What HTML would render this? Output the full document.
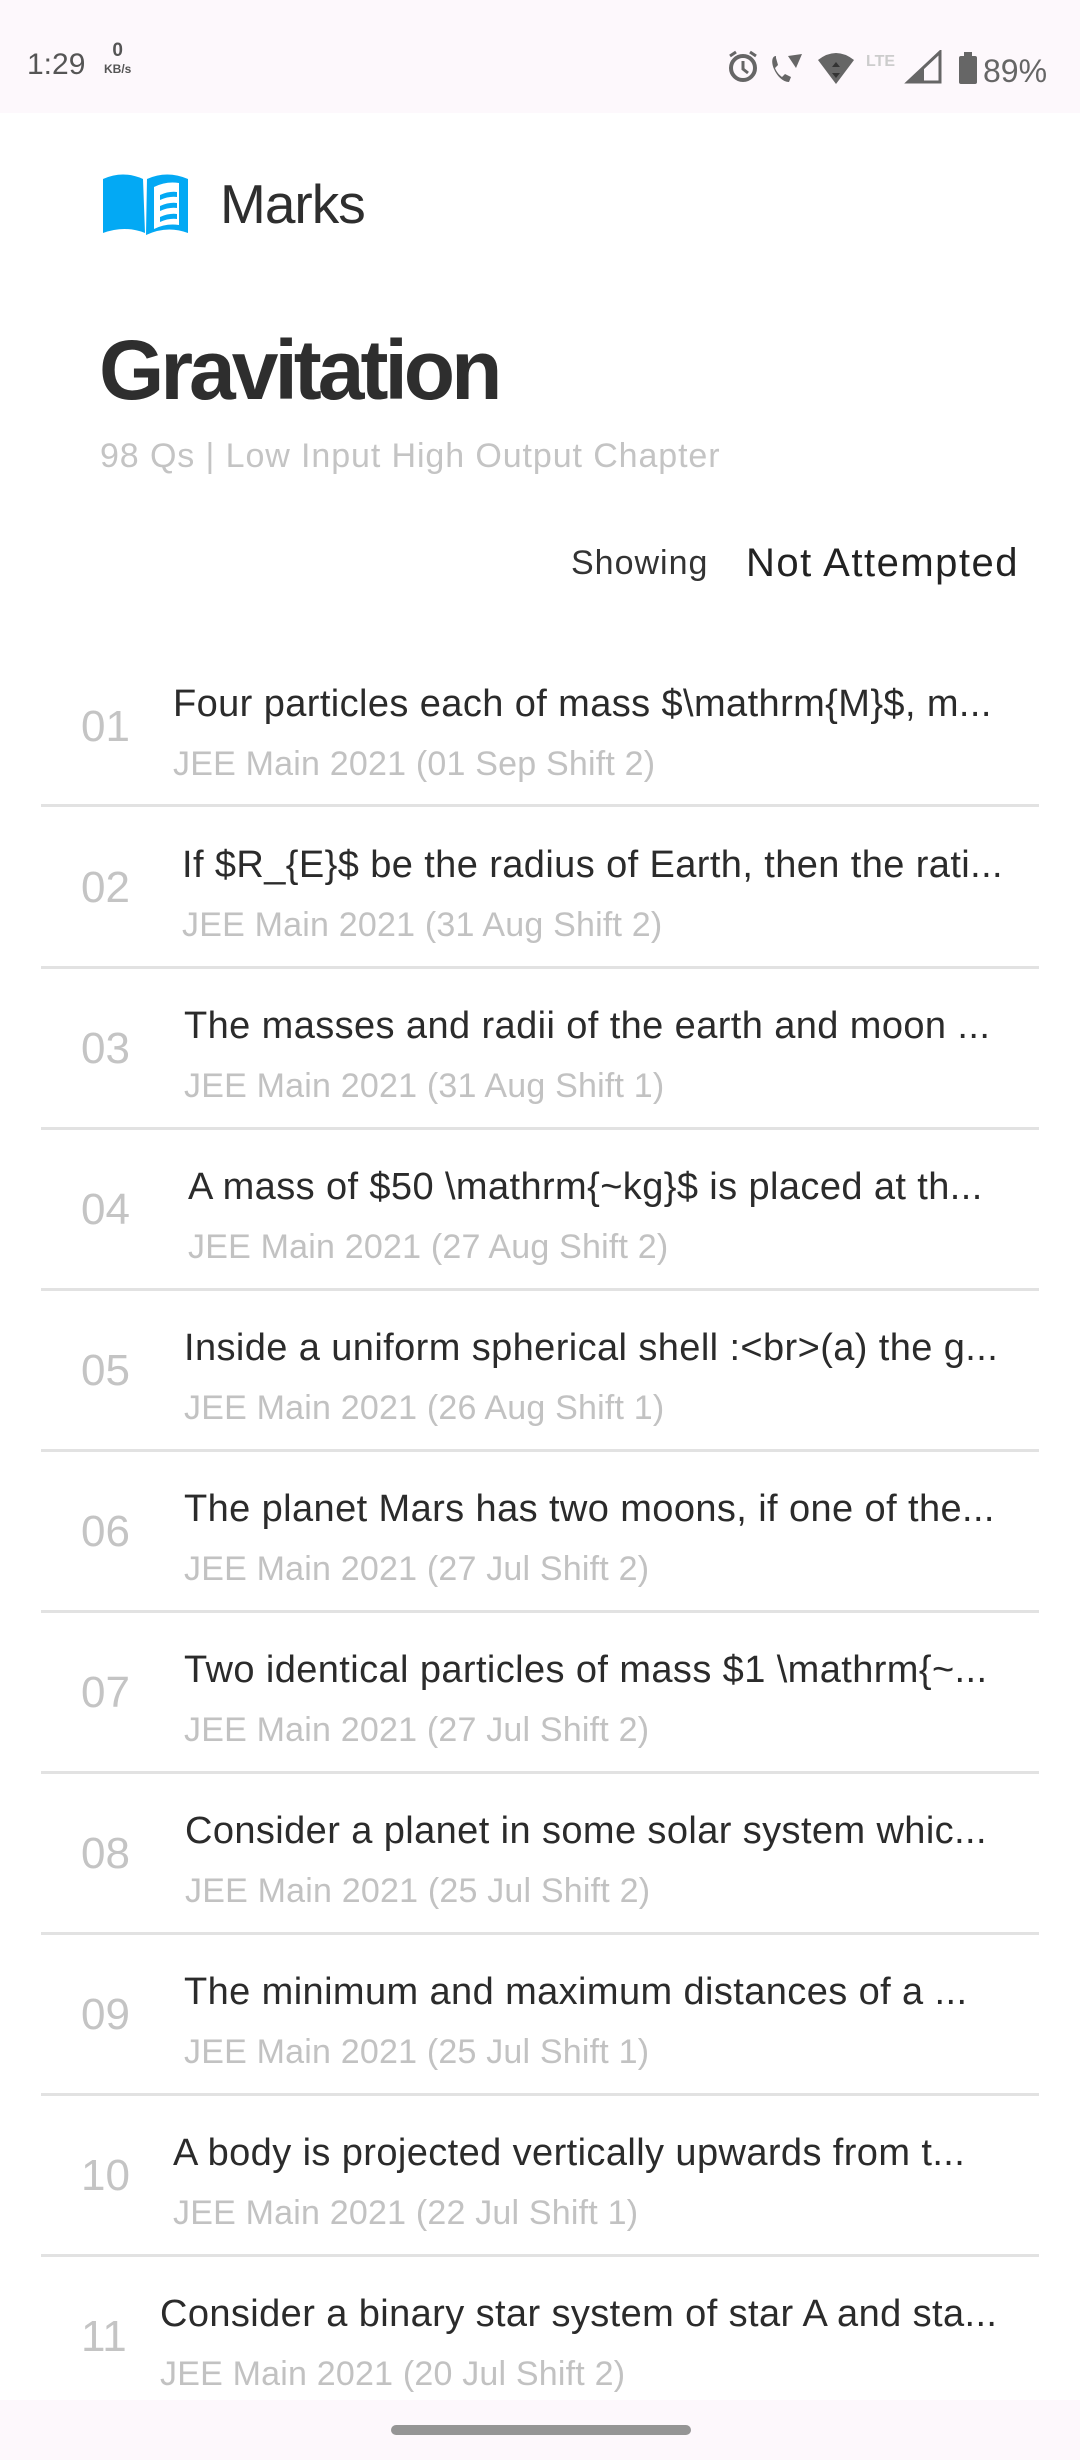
<!DOCTYPE html>
<html><head><meta charset="utf-8"><style>
*{margin:0;padding:0;box-sizing:border-box}
body{width:1080px;height:2460px;background:#fff;font-family:"Liberation Sans",sans-serif;position:relative;overflow:hidden}
.abs{position:absolute;white-space:nowrap}
.sb{position:absolute;left:0;top:0;width:1080px;height:113px;background:#fdf8fc}
.row .t{position:absolute;font-size:38px;letter-spacing:0.4px;color:#2b2b2b;white-space:nowrap;margin-top:3px}
.row .s{position:absolute;font-size:34px;letter-spacing:0.2px;color:#c2c2c2;white-space:nowrap;margin-top:3px}
.row .n{position:absolute;left:81px;font-size:44px;color:#c4c4c4;white-space:nowrap}
.sep{position:absolute;left:41px;width:998px;height:3px;background:#e2e2e2}
</style></head><body>
<div class="sb"></div>
<div class="abs" style="left:27px;top:48px;font-size:30px;color:#555">1:29</div>
<div class="abs" style="left:104px;top:42px;font-size:19px;color:#555;font-weight:bold;text-align:center;line-height:17px">0<br><span style="font-size:12px">KB/s</span></div>
<svg class="abs" style="left:726px;top:50px" width="330" height="36" viewBox="0 0 330 36">
 <circle cx="17" cy="18" r="12" fill="none" stroke="#666" stroke-width="4"/>
 <path d="M17 11v8l5 4" fill="none" stroke="#666" stroke-width="3"/>
 <path d="M4 6l6-4M30 6l-6-4" stroke="#666" stroke-width="3"/>
 <path d="M50 6c-4 0-5 6-2 13s9 13 15 13l2-5-6-3-3 3c-3-2-6-6-7-9l3-3-2-7z" fill="#666"/>
 <path d="M62 6l14 -2l-6 14z" fill="#666"/>
 <path d="M92 10 Q110 -4 128 10 L110 34 Z" fill="#666"/>
 <path d="M110 12l4 5h-8zM110 28l4-5h-8z" fill="#333"/>
 <text x="140" y="16" font-size="16" font-weight="bold" fill="#ccc" font-family="Liberation Sans">LTE</text>
 <path d="M182 32 L214 2 V32 Z" fill="none" stroke="#666" stroke-width="3"/>
 <path d="M182 32 L198 17 V32Z" fill="#666"/>
 <rect x="233" y="6" width="18" height="28" rx="2" fill="#666"/><rect x="238" y="2" width="8" height="5" fill="#666"/>
 <text x="257" y="32" font-size="32" fill="#666" font-family="Liberation Sans">89%</text>
</svg>
<svg class="abs" style="left:103px;top:173px" width="86" height="64" viewBox="0 0 86 64">
 <path d="M0 6 Q20 -3 40 6 L42 60 Q22 52 0 60 Z" fill="#03a9f4"/>
 <path d="M44 6 Q64 -3 85 6 V60 Q64 52 43 62 Z" fill="#03a9f4"/>
 <path d="M51 14 Q63 8 76 10 V52 Q63 50 51 56 Z" fill="#fff"/>
 <path d="M57 22 Q66 18 74 19 V24 Q66 23 57 27Z M57 33 Q66 29 74 30 V35 Q66 34 57 38Z M57 44 Q66 40 74 41 V46 Q66 45 57 49Z" fill="#03a9f4"/>
</svg>
<div class="abs" style="left:220px;top:172px;font-size:55px;color:#2e2e2e;letter-spacing:-1px">Marks</div>
<div class="abs" style="left:99px;top:322px;font-size:84px;font-weight:bold;color:#2e2e2e;letter-spacing:-4px">Gravitation</div>
<div class="abs" style="left:100px;top:437px;font-size:34px;letter-spacing:0.9px;color:#c4c4c4">98 Qs | Low Input High Output Chapter</div>
<div class="abs" style="left:571px;top:544px;font-size:34px;letter-spacing:1px;color:#333">Showing</div>
<div class="abs" style="right:61px;top:541px;font-size:40px;letter-spacing:1.5px;color:#222">Not Attempted</div>

<div class="row">
<div class="n" style="top:702px">01</div><div class="t" style="left:173px;top:680px">Four particles each of mass $\mathrm{M}$, m...</div><div class="s" style="left:173px;top:742px">JEE Main 2021 (01 Sep Shift 2)</div>
<div class="sep" style="top:804px"></div>
<div class="n" style="top:863px">02</div><div class="t" style="left:182px;top:841px">If $R_{E}$ be the radius of Earth, then the rati...</div><div class="s" style="left:182px;top:903px">JEE Main 2021 (31 Aug Shift 2)</div>
<div class="sep" style="top:966px"></div>
<div class="n" style="top:1024px">03</div><div class="t" style="left:184px;top:1002px">The masses and radii of the earth and moon ...</div><div class="s" style="left:184px;top:1064px">JEE Main 2021 (31 Aug Shift 1)</div>
<div class="sep" style="top:1127px"></div>
<div class="n" style="top:1185px">04</div><div class="t" style="left:188px;top:1163px">A mass of $50 \mathrm{~kg}$ is placed at th...</div><div class="s" style="left:188px;top:1225px">JEE Main 2021 (27 Aug Shift 2)</div>
<div class="sep" style="top:1288px"></div>
<div class="n" style="top:1346px">05</div><div class="t" style="left:184px;top:1324px">Inside a uniform spherical shell :&lt;br&gt;(a) the g...</div><div class="s" style="left:184px;top:1386px">JEE Main 2021 (26 Aug Shift 1)</div>
<div class="sep" style="top:1449px"></div>
<div class="n" style="top:1507px">06</div><div class="t" style="left:184px;top:1485px">The planet Mars has two moons, if one of the...</div><div class="s" style="left:184px;top:1547px">JEE Main 2021 (27 Jul Shift 2)</div>
<div class="sep" style="top:1610px"></div>
<div class="n" style="top:1668px">07</div><div class="t" style="left:184px;top:1646px">Two identical particles of mass $1 \mathrm{~...</div><div class="s" style="left:184px;top:1708px">JEE Main 2021 (27 Jul Shift 2)</div>
<div class="sep" style="top:1771px"></div>
<div class="n" style="top:1829px">08</div><div class="t" style="left:185px;top:1807px">Consider a planet in some solar system whic...</div><div class="s" style="left:185px;top:1869px">JEE Main 2021 (25 Jul Shift 2)</div>
<div class="sep" style="top:1932px"></div>
<div class="n" style="top:1990px">09</div><div class="t" style="left:184px;top:1968px">The minimum and maximum distances of a ...</div><div class="s" style="left:184px;top:2030px">JEE Main 2021 (25 Jul Shift 1)</div>
<div class="sep" style="top:2093px"></div>
<div class="n" style="top:2151px">10</div><div class="t" style="left:173px;top:2129px">A body is projected vertically upwards from t...</div><div class="s" style="left:173px;top:2191px">JEE Main 2021 (22 Jul Shift 1)</div>
<div class="sep" style="top:2254px"></div>
<div class="n" style="top:2312px">11</div><div class="t" style="left:160px;top:2290px">Consider a binary star system of star A and sta...</div><div class="s" style="left:160px;top:2352px">JEE Main 2021 (20 Jul Shift 2)</div>
</div>
<div style="position:absolute;left:0;top:2400px;width:1080px;height:60px;background:#fdf8fc"></div>
<div style="position:absolute;left:391px;top:2425px;width:300px;height:10px;border-radius:5px;background:#959595"></div>
</body></html>
